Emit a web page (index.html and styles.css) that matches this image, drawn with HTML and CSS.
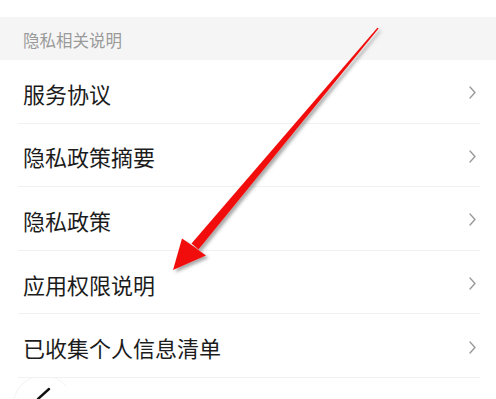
FILE: index.html
```html
<!DOCTYPE html>
<html lang="zh-CN">
<head>
<meta charset="utf-8">
<title>隐私相关说明</title>
<link rel="stylesheet" href="styles.css">
</head>
<body>
<div class="page">
  <div class="top-space"></div>
  <div class="section-title">隐私相关说明</div>
  <ul class="menu">
    <li class="item"><span class="label">服务协议</span><svg class="chev" viewBox="0 0 7 13" width="7" height="13"><polyline points="1,1 6,6.5 1,12"/></svg></li>
    <li class="item"><span class="label">隐私政策摘要</span><svg class="chev" viewBox="0 0 7 13" width="7" height="13"><polyline points="1,1 6,6.5 1,12"/></svg></li>
    <li class="item"><span class="label">隐私政策</span><svg class="chev" viewBox="0 0 7 13" width="7" height="13"><polyline points="1,1 6,6.5 1,12"/></svg></li>
    <li class="item"><span class="label">应用权限说明</span><svg class="chev" viewBox="0 0 7 13" width="7" height="13"><polyline points="1,1 6,6.5 1,12"/></svg></li>
    <li class="item"><span class="label">已收集个人信息清单</span><svg class="chev" viewBox="0 0 7 13" width="7" height="13"><polyline points="1,1 6,6.5 1,12"/></svg></li>
  </ul>
  <div class="bottom-bar">
    <svg class="bottom-icon" viewBox="0 0 80 21" width="80" height="21">
      <path d="M14 21 A30 30 0 0 1 66 8" fill="none" stroke="#f5f5f5" stroke-width="1.2"/>
      <line x1="38" y1="21" x2="49" y2="11" stroke="#111" stroke-width="2.4" stroke-linecap="round"/>
    </svg>
  </div>
  <svg class="arrow" viewBox="0 0 496 399" width="496" height="399">
    <defs>
      <filter id="sh" x="-20%" y="-20%" width="140%" height="140%">
        <feDropShadow dx="2.5" dy="2.5" stdDeviation="1.6" flood-color="#555" flood-opacity="0.5"/>
      </filter>
    </defs>
    <g filter="url(#sh)" fill="#f2100f">
      <polygon points="377.4,27.8 378.6,28.6 198.5,249.5 191.5,243.5"/>
      <polygon points="173,270 182,238.5 193,246 206,255.5"/>
    </g>
  </svg>
</div>
</body>
</html>
```
FILE: styles.css
```css
* { box-sizing: border-box; }
html, body { margin: 0; padding: 0; background: #fff; }
body {
  font-family: "Noto Sans CJK SC", "Noto Sans", sans-serif;
  width: 496px;
  height: 399px;
  overflow: hidden;
}
.page { position: relative; width: 496px; height: 399px; overflow: hidden; }
.top-space { height: 17px; }
.section-title {
  height: 43px;
  background: #f5f5f5;
  color: #9a9a9a;
  font-size: 16.5px;
  padding-left: 23px;
  display: flex;
  align-items: center;
  padding-top: 2px;
}
.menu { list-style: none; margin: 0; padding: 0; }
.item {
  height: 63.6px;
  margin: 0 16px 0 18px;
  padding: 3px 4px 0 5px;
  border-bottom: 1px solid #f1f1f1;
  display: flex;
  align-items: center;
  justify-content: space-between;
}
.label { font-size: 22px; color: #1c1c1c; line-height: 1; }
.chev { fill: none; stroke: #9a9a9a; stroke-width: 1.4; stroke-linecap: round; stroke-linejoin: round; }
.bottom-bar { height: 21px; }
.bottom-icon { display: block; }
.arrow { position: absolute; left: 0; top: 0; pointer-events: none; }
```
